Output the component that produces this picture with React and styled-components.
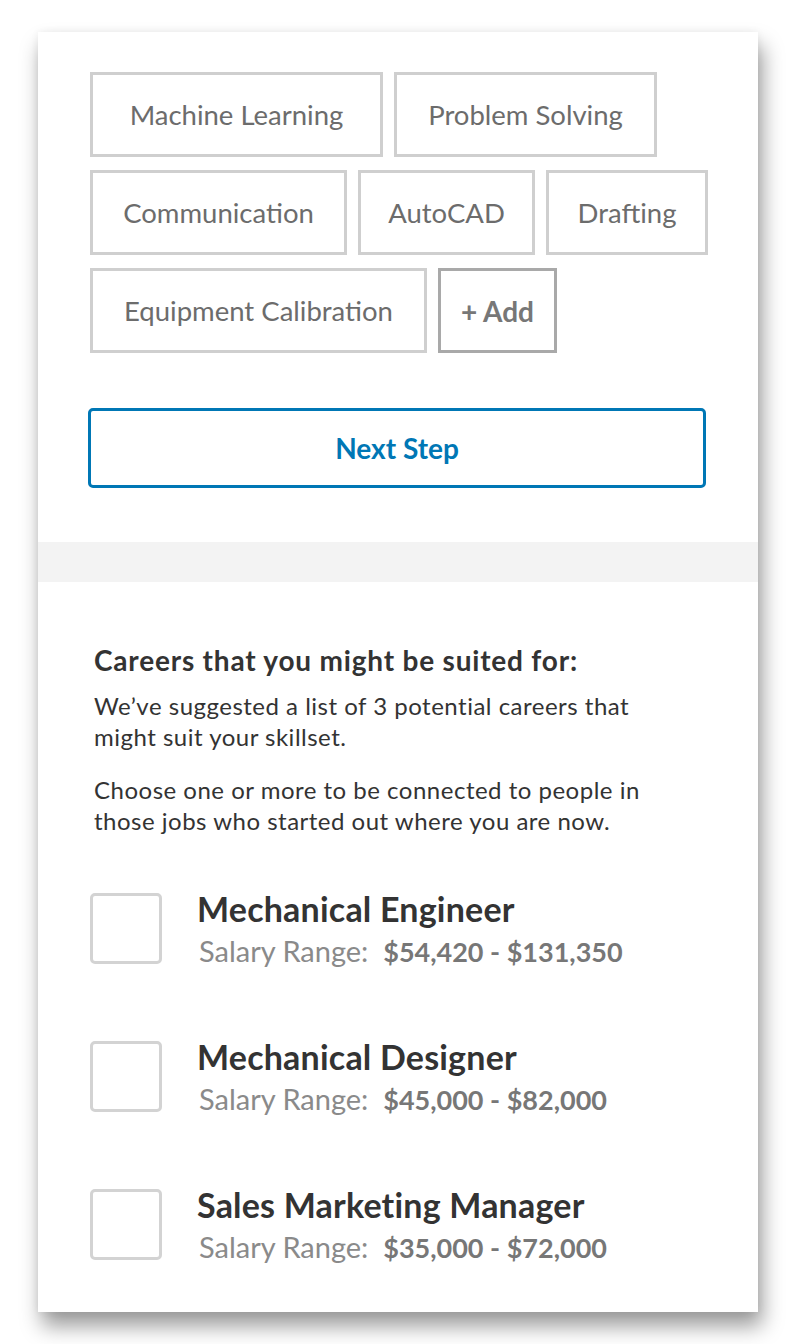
import styled, { createGlobalStyle } from 'styled-components'

const skills = [
  { label: 'Machine Learning', width: 293 },
  { label: 'Problem Solving', width: 263 },
  { label: 'Communication', width: 257 },
  { label: 'AutoCAD', width: 177 },
  { label: 'Drafting', width: 162 },
  { label: 'Equipment Calibration', width: 337 },
]

const careers = [
  { title: 'Mechanical Engineer', salary: '$54,420 - $131,350' },
  { title: 'Mechanical Designer', salary: '$45,000 - $82,000' },
  { title: 'Sales Marketing Manager', salary: '$35,000 - $72,000' },
]

const App = () => {
  return (
    <Page>
      <GlobalStyle />
      <Card>
        <SkillsSection>
          <Tags>
            {skills.map((skill) => (
              <Tag key={skill.label} $w={skill.width}>
                {skill.label}
              </Tag>
            ))}
            <Tag $w={119} $add>
              + Add
            </Tag>
          </Tags>
          <NextButton>Next Step</NextButton>
        </SkillsSection>
        <Divider />
        <CareersSection>
          <Heading>Careers that you might be suited for:</Heading>
          <Text>
            We’ve suggested a list of 3 potential careers that might suit your
            skillset.
          </Text>
          <Text>
            Choose one or more to be connected to people in those jobs who
            started out where you are now.
          </Text>
          <CareerList>
            {careers.map((career) => (
              <CareerRow key={career.title}>
                <Checkbox />
                <CareerInfo>
                  <CareerTitle>{career.title}</CareerTitle>
                  <Salary>
                    Salary Range:&nbsp; <b>{career.salary}</b>
                  </Salary>
                </CareerInfo>
              </CareerRow>
            ))}
          </CareerList>
        </CareersSection>
      </Card>
    </Page>
  )
}
export default App

const GlobalStyle = createGlobalStyle`
  body {
    margin: 0;
    background: #ffffff;
    font-family: Lato, "Open Sans", sans-serif;
  }
`
const Page = styled.div`
  padding: 32px 38px 32px 38px;
`
const Card = styled.div`
  width: 720px;
  background: #ffffff;
  box-shadow: 4px 14px 20px rgba(0, 0, 0, 0.4), 0 0 8px rgba(0, 0, 0, 0.06);
`
const SkillsSection = styled.div`
  padding: 40px 40px 54px 52px;
`
const Tags = styled.div`
  display: flex;
  flex-wrap: wrap;
  gap: 13px 11px;
`
const Tag = styled.div`
  box-sizing: border-box;
  width: ${(p) => p.$w}px;
  height: 85px;
  display: flex;
  align-items: center;
  justify-content: center;
  border: 3px solid ${(p) => (p.$add ? '#a9a9a9' : '#cfcfcf')};
  color: ${(p) => (p.$add ? '#777777' : '#6c6c6c')};
  font-size: ${(p) => (p.$add ? '28px' : '27.5px')};
  font-weight: ${(p) => (p.$add ? 700 : 400)};
  white-space: nowrap;
`
const NextButton = styled.button`
  box-sizing: border-box;
  display: block;
  width: 618px;
  height: 80px;
  margin: 55px 0 0 -2px;
  background: #ffffff;
  border: 3px solid #0077b5;
  border-radius: 5px;
  color: #0077b5;
  font-family: Lato, "Open Sans", sans-serif;
  font-size: 28px;
  font-weight: 700;
`
const Divider = styled.div`
  height: 40px;
  background: #f3f3f3;
`
const CareersSection = styled.div`
  padding: 62px 100px 44px 56px;
`
const Heading = styled.h3`
  margin: 0;
  font-size: 28px;
  line-height: 32px;
  font-weight: 700;
  letter-spacing: 0.8px;
  color: #333333;
  white-space: nowrap;
`
const Text = styled.p`
  margin: 14px 0 0;
  font-size: 24px;
  line-height: 31px;
  letter-spacing: 0.5px;
  color: #333333;
  & + & {
    margin-top: 22px;
  }
`
const CareerList = styled.div`
  display: flex;
  flex-direction: column;
  gap: 65px;
  margin-top: 53px;
`
const CareerRow = styled.div`
  display: flex;
  align-items: flex-start;
  gap: 35px;
`
const Checkbox = styled.div`
  box-sizing: border-box;
  flex: none;
  width: 72px;
  height: 71px;
  margin: 4px 0 0 -4px;
  border: 3px solid #d3d3d3;
  border-radius: 5px;
`
const CareerInfo = styled.div`
  display: flex;
  flex-direction: column;
  white-space: nowrap;
`
const CareerTitle = styled.div`
  font-size: 34px;
  line-height: 40px;
  font-weight: 700;
  letter-spacing: 0.2px;
  color: #333333;
`
const Salary = styled.div`
  margin-top: 2px;
  padding-left: 2px;
  font-size: 29px;
  line-height: 40px;
  color: #8a8a8a;
  b {
    font-size: 27px;
    font-weight: 700;
    color: #777777;
  }
`
